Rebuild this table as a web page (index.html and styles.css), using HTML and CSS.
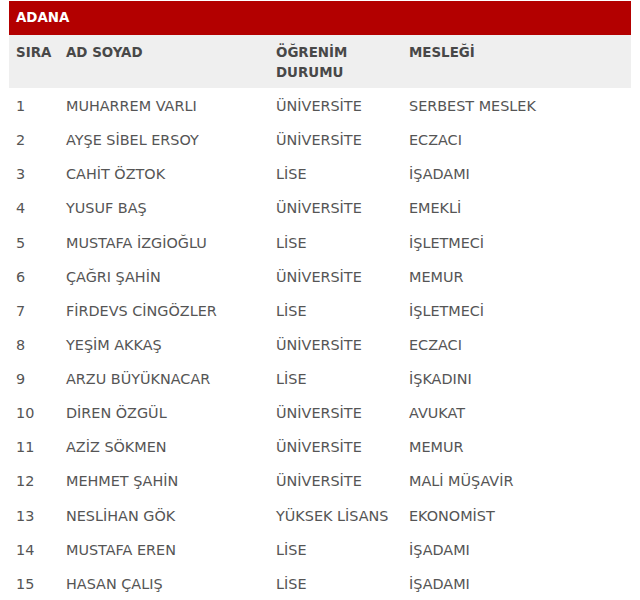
FILE: index.html
```html
<!DOCTYPE html>
<html lang="tr">
<head>
<meta charset="utf-8">
<link rel="stylesheet" href="styles.css">
</head>
<body>
<div class="wrap">
  <div class="title">ADANA</div>
  <table class="list">
    <thead>
      <tr><th class="c1">SIRA</th><th class="c2">AD SOYAD</th><th class="c3">ÖĞRENİM DURUMU</th><th class="c4">MESLEĞİ</th></tr>
    </thead>
    <tbody>
      <tr><td>1</td><td>MUHARREM VARLI</td><td>ÜNİVERSİTE</td><td>SERBEST MESLEK</td></tr>
      <tr><td>2</td><td>AYŞE SİBEL ERSOY</td><td>ÜNİVERSİTE</td><td>ECZACI</td></tr>
      <tr><td>3</td><td>CAHİT ÖZTOK</td><td>LİSE</td><td>İŞADAMI</td></tr>
      <tr><td>4</td><td>YUSUF BAŞ</td><td>ÜNİVERSİTE</td><td>EMEKLİ</td></tr>
      <tr><td>5</td><td>MUSTAFA İZGİOĞLU</td><td>LİSE</td><td>İŞLETMECİ</td></tr>
      <tr><td>6</td><td>ÇAĞRI ŞAHİN</td><td>ÜNİVERSİTE</td><td>MEMUR</td></tr>
      <tr><td>7</td><td>FİRDEVS CİNGÖZLER</td><td>LİSE</td><td>İŞLETMECİ</td></tr>
      <tr><td>8</td><td>YEŞİM AKKAŞ</td><td>ÜNİVERSİTE</td><td>ECZACI</td></tr>
      <tr><td>9</td><td>ARZU BÜYÜKNACAR</td><td>LİSE</td><td>İŞKADINI</td></tr>
      <tr><td>10</td><td>DİREN ÖZGÜL</td><td>ÜNİVERSİTE</td><td>AVUKAT</td></tr>
      <tr><td>11</td><td>AZİZ SÖKMEN</td><td>ÜNİVERSİTE</td><td>MEMUR</td></tr>
      <tr><td>12</td><td>MEHMET ŞAHİN</td><td>ÜNİVERSİTE</td><td>MALİ MÜŞAVİR</td></tr>
      <tr><td>13</td><td>NESLİHAN GÖK</td><td>YÜKSEK LİSANS</td><td>EKONOMİST</td></tr>
      <tr><td>14</td><td>MUSTAFA EREN</td><td>LİSE</td><td>İŞADAMI</td></tr>
      <tr><td>15</td><td>HASAN ÇALIŞ</td><td>LİSE</td><td>İŞADAMI</td></tr>
    </tbody>
  </table>
</div>
</body>
</html>
```
FILE: styles.css
```css
html, body {
  margin: 0;
  padding: 0;
  background: #fff;
}
.wrap {
  padding: 1px 9px 0 9px;
  width: 622px;
  font-family: "DejaVu Sans", sans-serif;
  color: #555;
}
.title {
  background: #b30000;
  color: #fff;
  font-weight: bold;
  font-size: 13.4px;
  height: 34px;
  line-height: 33px;
  padding-left: 7px;
}
.list {
  width: 622px;
  border-collapse: collapse;
  table-layout: fixed;
  font-size: 14.4px;
}
.list th {
  background: #efefef;
  text-align: left;
  vertical-align: top;
  font-weight: bold;
  font-size: 13.4px;
  color: #484848;
  line-height: 20px;
  padding: 8px 7px 5px 7px;
}
.list td {
  line-height: 20px;
  padding: 8px 7px 6.14px 7px;
  white-space: nowrap;
}
.c1 { width: 36px; }
.c2 { width: 196px; }
.c3 { width: 119px; }
.c4 { width: auto; }
```
